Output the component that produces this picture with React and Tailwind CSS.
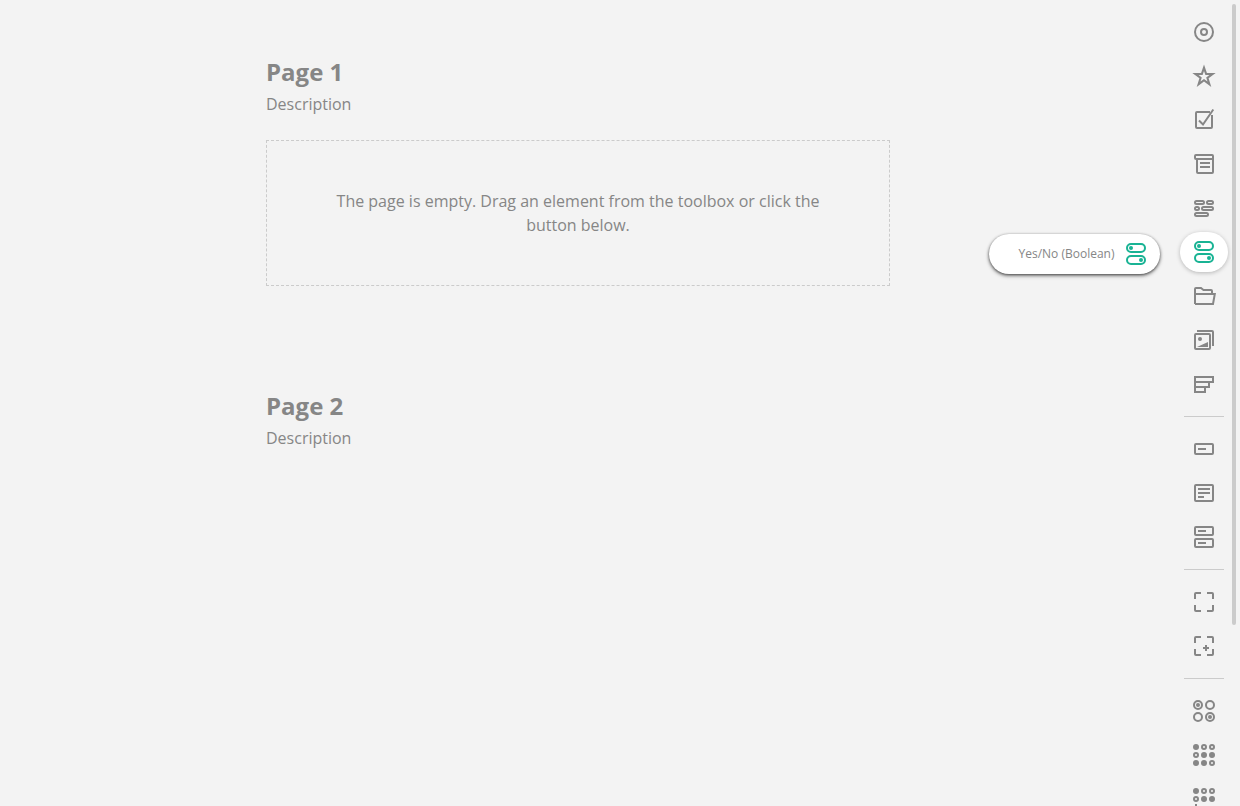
import React from "react";

const iconShapes = {
  radio: (
    <>
      <circle cx="12" cy="12" r="9" />
      <circle cx="12" cy="12" r="3" />
    </>
  ),
  rating: (
    <path
      d="M12 .5 14.9 9 23.7 9 16.6 14.3 19.3 22.9 12 17.6 4.7 22.9 7.4 14.3 .3 9 9.1 9ZM12 7 10.6 11 6.6 11 9.8 13.5 8.5 17.6 12 15.1 15.5 17.6 14.2 13.5 17.4 11 13.4 11Z"
      fill="currentColor"
      fillRule="evenodd"
      stroke="none"
    />
  ),
  checkbox: (
    <>
      <path d="M18 4H5a1 1 0 0 0-1 1v14a1 1 0 0 0 1 1h14a1 1 0 0 0 1-1V7" />
      <path d="M7 12.5 11 16.5 21.3 1.5" />
    </>
  ),
  dropdown: (
    <>
      <path d="M5 7H4a1 1 0 0 1-1-1V4a1 1 0 0 1 1-1h16a1 1 0 0 1 1 1v16a1 1 0 0 1-1 1H6a1 1 0 0 1-1-1V7h16" />
      <path d="M8 11h10M8 15h10" />
    </>
  ),
  tagbox: (
    <>
      <rect x="3" y="5" width="9" height="3" rx="1.5" />
      <rect x="15" y="5" width="6" height="3" rx="1.5" />
      <rect x="3" y="11" width="4" height="3" rx="1.5" />
      <rect x="10" y="11" width="11" height="3" rx="1.5" />
      <rect x="3" y="17" width="13" height="3" rx="1.5" />
    </>
  ),
  boolean: (
    <>
      <rect x="3" y="2" width="18" height="8" rx="4" />
      <rect x="3" y="14" width="18" height="8" rx="4" />
      <g fill="currentColor" stroke="none">
        <circle cx="7" cy="6" r="2" />
        <circle cx="17" cy="18" r="2" />
      </g>
    </>
  ),
  file: (
    <>
      <path d="M3 20V5a1 1 0 0 1 1-1h5l2.5 2H19a1 1 0 0 1 1 1v3" />
      <path d="M3 10h19.8L21 20H3" />
    </>
  ),
  image: (
    <>
      <path d="M5 3h15a1 1 0 0 1 1 1v14" />
      <rect x="3" y="6" width="15" height="15" rx="1" />
      <g fill="currentColor" stroke="none">
        <circle cx="8" cy="11" r="2" />
        <path d="M5 19 16 14V19Z" />
      </g>
    </>
  ),
  ranking: <path d="M3 5h18v5H3ZM3 10h14v5H3ZM3 15h10v5H3Z" />,
  text: (
    <>
      <rect x="3" y="7" width="18" height="10" rx="1" />
      <path d="M6 12h8" />
    </>
  ),
  comment: (
    <>
      <rect x="3" y="4" width="18" height="16" rx="1" />
      <path d="M6 8h12M6 12h12M6 16h6" />
    </>
  ),
  multipletext: (
    <>
      <rect x="3" y="2" width="18" height="8" rx="1" />
      <rect x="3" y="14" width="18" height="8" rx="1" />
      <path d="M6 6h8M6 18h8" />
    </>
  ),
  panel: (
    <path d="M9 3H4a1 1 0 0 0-1 1v5M15 3h5a1 1 0 0 1 1 1v5M9 21H4a1 1 0 0 1-1-1v-5M15 21h5a1 1 0 0 0 1-1v-5" />
  ),
  paneldynamic: (
    <path d="M9 3H4a1 1 0 0 0-1 1v5M15 3h5a1 1 0 0 1 1 1v5M9 21H4a1 1 0 0 1-1-1v-5M15 21h5a1 1 0 0 0 1-1v-5M11 14h6M14 11v6" />
  ),
  matrix: (
    <>
      <circle cx="6" cy="6" r="4" />
      <circle cx="18" cy="6" r="4" />
      <circle cx="6" cy="18" r="4" />
      <circle cx="18" cy="18" r="4" />
      <g fill="currentColor" stroke="none">
        <circle cx="6" cy="6" r="2" />
        <circle cx="18" cy="18" r="2" />
      </g>
    </>
  ),
  matrixdropdown: (
    <>
      <g fill="currentColor" stroke="none">
        <circle cx="4" cy="4" r="3" />
        <circle cx="12" cy="12" r="3" />
        <circle cx="20" cy="12" r="3" />
        <circle cx="4" cy="20" r="3" />
        <circle cx="12" cy="20" r="3" />
      </g>
      <circle cx="12" cy="4" r="2" />
      <circle cx="20" cy="4" r="2" />
      <circle cx="4" cy="12" r="2" />
      <circle cx="20" cy="20" r="2" />
    </>
  ),
  matrixdynamic: (
    <>
      <g fill="currentColor" stroke="none">
        <circle cx="4" cy="4" r="3" />
        <circle cx="12" cy="12" r="3" />
        <circle cx="20" cy="12" r="3" />
      </g>
      <circle cx="12" cy="4" r="2" />
      <circle cx="20" cy="4" r="2" />
      <circle cx="4" cy="12" r="2" />
      <path d="M1 20h6M4 17v6" />
    </>
  ),
};

const groups = [
  [
    ["radio", "Radio Button Group"],
    ["rating", "Rating Scale"],
    ["checkbox", "Checkboxes"],
    ["dropdown", "Dropdown"],
    ["tagbox", "Multi-Select Dropdown"],
    ["boolean", "Yes/No (Boolean)"],
    ["file", "File Upload"],
    ["image", "Image Picker"],
    ["ranking", "Ranking"],
  ],
  [
    ["text", "Single-Line Input"],
    ["comment", "Long Text"],
    ["multipletext", "Multiple Textboxes"],
  ],
  [
    ["panel", "Panel"],
    ["paneldynamic", "Dynamic Panel"],
  ],
  [
    ["matrix", "Single-Select Matrix"],
    ["matrixdropdown", "Multi-Select Matrix"],
    ["matrixdynamic", "Dynamic Matrix"],
  ],
];

function Icon({ name }) {
  return (
    <svg
      viewBox="0 0 24 24"
      className="size-6 shrink-0"
      fill="none"
      stroke="currentColor"
      strokeWidth="2"
      aria-hidden="true"
    >
      {iconShapes[name]}
    </svg>
  );
}

function ToolboxItem({ name, label, active }) {
  return (
    <li className="relative">
      <button
        type="button"
        aria-label={label}
        className={
          active
            ? "flex h-10 w-12 items-center justify-center rounded-full bg-white text-[#19b394] shadow-[0_1px_4px_rgba(0,0,0,0.25)]"
            : "flex h-10 w-12 items-center justify-center rounded-full text-[#868686]"
        }
      >
        <Icon name={name} />
      </button>
      {active && (
        <div
          role="tooltip"
          className="absolute top-0.5 right-full mr-5 flex h-10 items-center gap-2 rounded-full bg-white pr-3 pl-7 text-xs whitespace-nowrap text-[#868686] shadow-[0_1px_3px_rgba(0,0,0,0.6),0_2px_4px_rgba(0,0,0,0.3)]"
        >
          <span className="min-w-[99px] text-center">{label}</span>
          <span className="text-[#19b394]">
            <Icon name={name} />
          </span>
        </div>
      )}
    </li>
  );
}

function Toolbox() {
  return (
    <aside className="relative w-15 shrink-0">
      <nav aria-label="Toolbox" className="py-3">
        {groups.map((items, index) => (
          <React.Fragment key={index}>
            {index > 0 && <hr className="mx-1 my-3 w-10 border-[#cbcbcb]" />}
            <ul className="flex flex-col gap-1">
              {items.map(([name, label]) => (
                <ToolboxItem
                  key={name}
                  name={name}
                  label={label}
                  active={name === "boolean"}
                />
              ))}
            </ul>
          </React.Fragment>
        ))}
      </nav>
      <div className="absolute top-1 right-1 h-[621px] w-1 rounded-xs bg-[#cbcbcb]" />
    </aside>
  );
}

function SurveyPage({ title, children }) {
  return (
    <section>
      <h2 className="text-2xl leading-8 font-bold">{title}</h2>
      <p className="mt-1">Description</p>
      {children}
    </section>
  );
}

export default function App() {
  return (
    <div className="flex h-screen overflow-hidden bg-[#f3f3f3] font-['Open_Sans',sans-serif] text-base text-[#868686]">
      <main className="min-w-0 flex-1 pt-14 pr-6">
        <div className="mx-auto flex max-w-[624px] flex-col gap-26">
          <SurveyPage title="Page 1">
            <div className="mt-6 border border-dashed border-[#cbcbcb] px-16 py-12 text-center">
              <p>
                The page is empty. Drag an element from the toolbox or click the
                button below.
              </p>
            </div>
          </SurveyPage>
          <SurveyPage title="Page 2" />
        </div>
      </main>
      <Toolbox />
    </div>
  );
}
